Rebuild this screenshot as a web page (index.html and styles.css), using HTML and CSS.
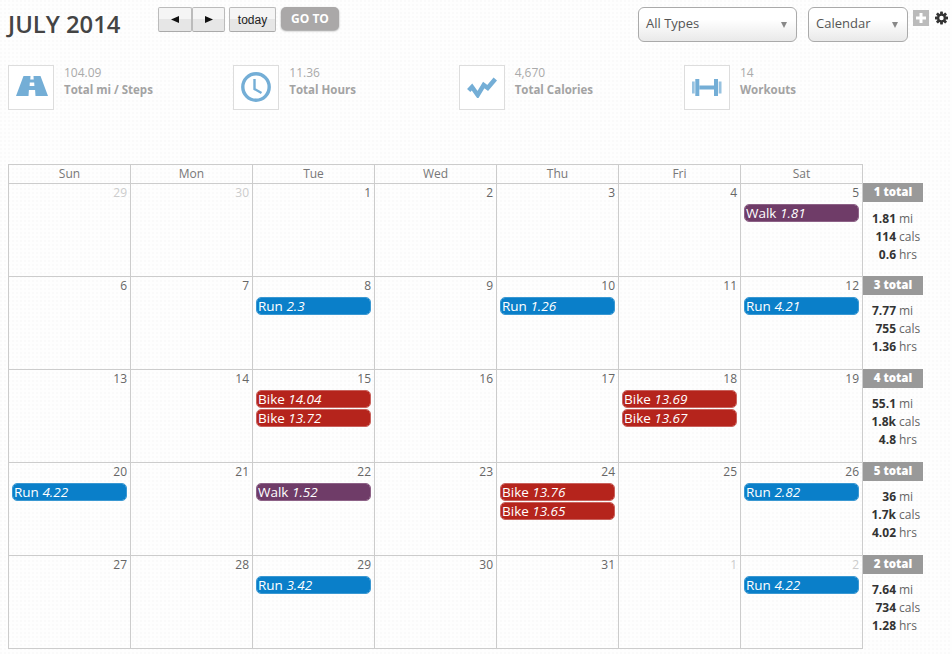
FILE: index.html
```html
<!DOCTYPE html>
<html lang="en">
<head>
<meta charset="utf-8">
<title>July 2014</title>
<link rel="stylesheet" href="styles.css">
</head>
<body>
<header class="topbar">
  <h1 class="title">JULY 2014</h1>
  <div class="nav">
    <div class="btn-group">
      <button class="fc-btn arrow" aria-label="Previous"><svg width="8" height="7" viewBox="0 0 8 7"><path d="M0 3.500L8 0v7z" fill="#111"/></svg></button><button class="fc-btn arrow" aria-label="Next"><svg width="8" height="7" viewBox="0 0 8 7"><path d="M8 3.500L0 0v7z" fill="#111"/></svg></button>
    </div>
    <button class="fc-btn today">today</button>
    <button class="goto">GO TO</button>
  </div>
  <div class="controls">
    <div class="select wide"><span>All Types</span><i class="caret"></i></div>
    <div class="select narrow"><span>Calendar</span><i class="caret"></i></div>
    <div class="plus"><svg width="16" height="16" viewBox="0 0 16 16"><rect width="16" height="16" fill="#bbb"/><path d="M6.500 3h3v3.500h3.500v3h-3.500v3.500h-3v-3.500h-3.500v-3h3.500z" fill="#fff"/></svg></div>
    <svg class="gear" width="13" height="14" viewBox="0 0 14 14"><g fill="#333"><circle cx="7" cy="7" r="4.800"/><rect x="5.500" y="0" width="3" height="14" rx=".5"/><rect x="5.500" y="0" width="3" height="14" rx=".5" transform="rotate(45 7 7)"/><rect x="5.500" y="0" width="3" height="14" rx=".5" transform="rotate(90 7 7)"/><rect x="5.500" y="0" width="3" height="14" rx=".5" transform="rotate(135 7 7)"/></g><circle cx="7" cy="7" r="2.400" fill="#fff"/></svg>
  </div>
</header>

<section class="stats">
  <div class="stat">
    <div class="stat-icon"><svg class="road" width="32" height="20" viewBox="0 0 32 20"><path fill="#74aed6" d="M7.500 0h7l-.2 3.500h3.400l-.2-3.500h7L32 20H19.500l-.4-6h-6.200l-.4 6H0zM13.800 6.500l-.2 3.500h4.800l-.2-3.500z"/></svg></div>
    <div class="stat-text"><div class="stat-num">104.09</div><div class="stat-label">Total mi / Steps</div></div>
  </div>
  <div class="stat">
    <div class="stat-icon"><svg class="clock" width="30" height="30" viewBox="0 0 30 30"><circle cx="15" cy="15" r="13.200" fill="none" stroke="#74aed6" stroke-width="3.400"/><path d="M13.500 7v10l7 4" fill="none" stroke="#74aed6" stroke-width="2.400"/></svg></div>
    <div class="stat-text"><div class="stat-num">11.36</div><div class="stat-label">Total Hours</div></div>
  </div>
  <div class="stat">
    <div class="stat-icon"><svg width="30" height="21" viewBox="0 0 30 21"><path fill="none" stroke="#74aed6" stroke-width="4.500" d="M1.700 13.500L5 10l5.700 8 6-10 4 3 7.600-9"/></svg></div>
    <div class="stat-text"><div class="stat-num">4,670</div><div class="stat-label">Total Calories</div></div>
  </div>
  <div class="stat">
    <div class="stat-icon"><svg width="30" height="17" viewBox="0 0 30 17"><g fill="#74aed6"><rect x="0" y="2.500" width="2.700" height="12" opacity=".75"/><rect x="3.300" y="0" width="4" height="17"/><rect x="7.300" y="6.500" width="14.700" height="4"/><rect x="22" y="0" width="4" height="17"/><rect x="26.700" y="2.500" width="2.800" height="12" opacity=".75"/></g></svg></div>
    <div class="stat-text"><div class="stat-num">14</div><div class="stat-label">Workouts</div></div>
  </div>
</section>

<main class="calendar">
  <div class="week head">
    <div class="dow">Sun</div><div class="dow">Mon</div><div class="dow">Tue</div><div class="dow">Wed</div><div class="dow">Thu</div><div class="dow">Fri</div><div class="dow">Sat</div>
  </div>

  <div class="week">
    <div class="day other"><div class="num">29</div></div>
    <div class="day other"><div class="num">30</div></div>
    <div class="day"><div class="num">1</div></div>
    <div class="day"><div class="num">2</div></div>
    <div class="day"><div class="num">3</div></div>
    <div class="day"><div class="num">4</div></div>
    <div class="day"><div class="num">5</div><div class="ev walk">Walk <em>1.81</em></div></div>
    <aside class="sum"><div class="sum-head">1 total</div><dl class="sum-list"><dt>1.81</dt><dd>mi</dd><dt>114</dt><dd>cals</dd><dt>0.6</dt><dd>hrs</dd></dl></aside>
  </div>

  <div class="week">
    <div class="day"><div class="num">6</div></div>
    <div class="day"><div class="num">7</div></div>
    <div class="day"><div class="num">8</div><div class="ev run">Run <em>2.3</em></div></div>
    <div class="day"><div class="num">9</div></div>
    <div class="day"><div class="num">10</div><div class="ev run">Run <em>1.26</em></div></div>
    <div class="day"><div class="num">11</div></div>
    <div class="day"><div class="num">12</div><div class="ev run">Run <em>4.21</em></div></div>
    <aside class="sum"><div class="sum-head">3 total</div><dl class="sum-list"><dt>7.77</dt><dd>mi</dd><dt>755</dt><dd>cals</dd><dt>1.36</dt><dd>hrs</dd></dl></aside>
  </div>

  <div class="week">
    <div class="day"><div class="num">13</div></div>
    <div class="day"><div class="num">14</div></div>
    <div class="day"><div class="num">15</div><div class="ev bike">Bike <em>14.04</em></div><div class="ev bike">Bike <em>13.72</em></div></div>
    <div class="day"><div class="num">16</div></div>
    <div class="day"><div class="num">17</div></div>
    <div class="day"><div class="num">18</div><div class="ev bike">Bike <em>13.69</em></div><div class="ev bike">Bike <em>13.67</em></div></div>
    <div class="day"><div class="num">19</div></div>
    <aside class="sum"><div class="sum-head">4 total</div><dl class="sum-list"><dt>55.1</dt><dd>mi</dd><dt>1.8k</dt><dd>cals</dd><dt>4.8</dt><dd>hrs</dd></dl></aside>
  </div>

  <div class="week">
    <div class="day"><div class="num">20</div><div class="ev run">Run <em>4.22</em></div></div>
    <div class="day"><div class="num">21</div></div>
    <div class="day"><div class="num">22</div><div class="ev walk">Walk <em>1.52</em></div></div>
    <div class="day"><div class="num">23</div></div>
    <div class="day"><div class="num">24</div><div class="ev bike">Bike <em>13.76</em></div><div class="ev bike">Bike <em>13.65</em></div></div>
    <div class="day"><div class="num">25</div></div>
    <div class="day"><div class="num">26</div><div class="ev run">Run <em>2.82</em></div></div>
    <aside class="sum"><div class="sum-head">5 total</div><dl class="sum-list"><dt>36</dt><dd>mi</dd><dt>1.7k</dt><dd>cals</dd><dt>4.02</dt><dd>hrs</dd></dl></aside>
  </div>

  <div class="week last">
    <div class="day"><div class="num">27</div></div>
    <div class="day"><div class="num">28</div></div>
    <div class="day"><div class="num">29</div><div class="ev run">Run <em>3.42</em></div></div>
    <div class="day"><div class="num">30</div></div>
    <div class="day"><div class="num">31</div></div>
    <div class="day other"><div class="num">1</div></div>
    <div class="day other"><div class="num">2</div><div class="ev run">Run <em>4.22</em></div></div>
    <aside class="sum"><div class="sum-head">2 total</div><dl class="sum-list"><dt>7.64</dt><dd>mi</dd><dt>734</dt><dd>cals</dd><dt>1.28</dt><dd>hrs</dd></dl></aside>
  </div>
</main>
</body>
</html>
```
FILE: styles.css
```css
* { box-sizing: border-box; }
html, body { height: 100%; overflow: hidden; }
body {
  margin: 0;
  font-family: "Open Sans", sans-serif;
  color: #555;
  background-color: #fefefe;
  background-image: radial-gradient(circle at 1px 1px, #fafafa 1px, transparent 1px);
  background-size: 4px 4px;
}

/* top bar */
.topbar { display: flex; height: 65px; padding: 7px 4px 0 8px; }
.title { margin: 2px 0 0; width: 150px; font-size: 23.800px; line-height: 30px; font-weight: 600; color: #444; }
.nav { display: flex; align-items: flex-start; }
.btn-group { display: flex; margin-right: 4px; }
.fc-btn {
  height: 25px; padding: 0;
  border: 1px solid #bbb; border-bottom-color: #aaa;
  border-radius: 2px;
  background: linear-gradient(#f5f5f5 50%, #e6e6e6 50%);
  color: #222; font: 12px "Liberation Sans", sans-serif;
}
.arrow { width: 34px; line-height: 0; }
.arrow svg { vertical-align: -1px; }
.arrow + .arrow { width: 33px; }
.today { width: 47px; margin-right: 5px; }
.goto {
  width: 58px; height: 23px; padding: 0;
  border: 0; border-radius: 5px;
  background: #aaa8a8; box-shadow: 0 1px 2px #999;
  color: #fff; font: 700 12px "Open Sans", sans-serif;
}
.controls { display: flex; align-items: flex-start; margin-left: auto; }
.select {
  display: flex; align-items: center; justify-content: space-between;
  height: 35px; padding: 0 9px 3px 7px;
  border: 1px solid #aaa; border-radius: 6px;
  background: linear-gradient(#fff 35%, #e9e9e9);
  font-size: 13px; color: #555;
}
.wide { width: 159px; margin-right: 11px; }
.narrow { width: 100px; margin-right: 5px; }
.caret { width: 0; height: 0; margin-top: 3px; border: 3.500px solid transparent; border-top: 6px solid #888; border-bottom: 0; }
.plus { height: 16px; margin: 3px 6px 0 0; line-height: 0; }
.gear { margin-top: 4px; }

/* stats */
.stats { display: flex; height: 99px; padding-left: 8px; }
.stat { display: flex; width: 225.330px; }
.stat-icon {
  display: flex; align-items: center; justify-content: center;
  width: 46px; height: 45px;
  border: 1px solid #ddd; background: #fff;
}
.road { margin: 0 0 3px 1px; }
.clock { margin-bottom: 2px; }
.stat-text { margin: -1px 0 0 10px; font-size: 12px; line-height: 17px; }
.stat-num { color: #aaa; }
.stat-label { font-size: 11.500px; font-weight: 700; color: #a3a3a3; }

/* calendar */
.calendar { width: 923px; margin-left: 8px; }
.week { display: grid; grid-template-columns: repeat(6, 122px) 123px 60px; height: 93px; }
.head { height: 19px; }
.dow {
  border: 1px solid #ccc; border-width: 1px 0 0 1px;
  text-align: center; font-size: 12px; line-height: 18px; color: #777;
}
.dow:nth-child(7) { border-right-width: 1px; }
.day { padding: 0 3px; border: 1px solid #ccc; border-width: 1px 0 0 1px; }
.day:nth-child(7) { border-right-width: 1px; }
.last { height: 94px; }
.last .day { border-bottom-width: 1px; }
.num { height: 20px; text-align: right; font-size: 12px; line-height: 17px; color: #666; }
.other .num { color: #ccc; }
.ev {
  width: 115px; height: 18px; margin-top: 1px; padding-left: 1px;
  border-radius: 5px; border: 1px solid rgba(255,255,255,.3);
  background-clip: padding-box;
  color: #fff; font-size: 13.500px; line-height: 16px; white-space: nowrap;
}
.num + .ev { margin-top: 0; }
.run { background-color: #0a7fc9; border-color: #3a98d2; }
.walk { background-color: #6f3c68; border-color: #8d6287; }
.bike { background-color: #b5241c; border-color: #c9625d; }
.sum-head {
  height: 19px; background: #999; color: #fff;
  text-align: center; font-size: 11.500px; font-weight: 800; line-height: 18px;
}
.sum-list {
  display: grid; grid-template-columns: 33px auto; column-gap: 3px;
  margin: 7px 0 0; font-size: 12px; line-height: 18px;
}
.head + .week .sum-list { margin-top: 8px; }
.sum-list dt { text-align: right; font-weight: 700; color: #333; }
.sum-list dd { margin: 0; color: #666; }
```
